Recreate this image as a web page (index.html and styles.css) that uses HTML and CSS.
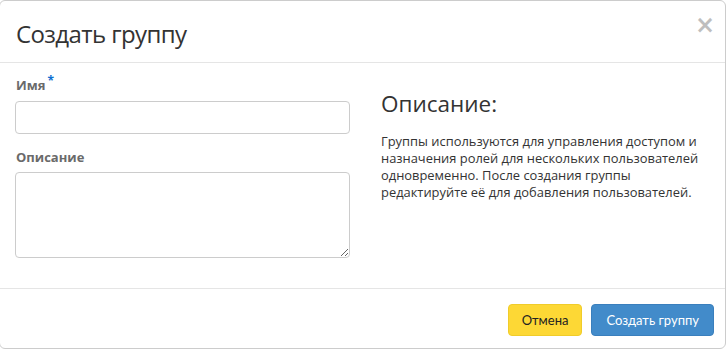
FILE: index.html
```html
<!DOCTYPE html>
<html lang="ru">
<head>
    <meta charset="UTF-8">
    <title>Создать группу</title>
    <link rel="stylesheet" href="styles.css">
</head>
<body>

<div class="modal">
    <div class="modal-header">
        <h3 class="modal-title">Создать группу</h3>
        <span class="close">&times;</span>
    </div>

    <div class="modal-body">
        <div class="form-col">
            <div class="form-group">
                <label for="name">Имя<span class="required">*</span></label>
                <input type="text" id="name">
            </div>
            <div class="form-group">
                <label for="description">Описание</label>
                <textarea id="description" rows="4"></textarea>
            </div>
        </div>
        <div class="help-col">
            <h3>Описание:</h3>
            <p>Группы используются для управления доступом и назначения ролей для нескольких пользователей одновременно. После создания группы редактируйте её для добавления пользователей.</p>
        </div>
    </div>

    <div class="modal-footer">
        <button class="btn btn-cancel">Отмена</button>
        <button class="btn btn-primary">Создать группу</button>
    </div>
</div>

</body>
</html>
```

FILE: styles.css
```css
body {
    margin: 0;
    padding: 0;
    background: #fff;
    font-family: 'Open Sans', sans-serif;
    color: #333;
}

.modal {
    width: 727px;
    height: 349px;
    border: 1px solid #ccc;
    border-radius: 6px;
    box-sizing: border-box;
    margin: 0 0 0 -1px;
}

.modal-header {
    display: flex;
    justify-content: space-between;
    align-items: flex-start;
    padding: 15px 10px 0 16px;
    height: 62px;
    box-sizing: border-box;
    border-bottom: 1px solid #e5e5e5;
}

.modal-title {
    margin: 3px 0 0;
    font-size: 24px;
    font-weight: 400;
    line-height: 30px;
    letter-spacing: -0.6px;
}

.close {
    font-family: 'DejaVu Sans', sans-serif;
    font-size: 24px;
    font-weight: bold;
    color: #000;
    opacity: 0.25;
    line-height: 20px;
    margin-top: -1px;
}

.modal-body {
    display: flex;
    padding: 13px 15px 0 15px;
    height: 226px;
    box-sizing: border-box;
    border-bottom: 1px solid #e5e5e5;
}

.form-col {
    flex: 0 0 335px;
}

.form-group {
    margin-bottom: 14px;
}

label {
    display: block;
    font-size: 13px;
    font-weight: 700;
    color: #6a6a6a;
    margin-bottom: 6px;
    line-height: 18px;
    padding-left: 1px;
}

.required {
    position: relative;
    top: -5px;
    color: #0e6fd1;
    font-size: 12px;
    margin-left: 2px;
}

input, textarea {
    display: block;
    width: 100%;
    box-sizing: border-box;
    border: 1px solid #ccc;
    border-radius: 4px;
    font-family: inherit;
    font-size: 13px;
    padding: 6px 10px;
}

input {
    height: 33px;
}

textarea {
    height: 86px;
}

.help-col {
    margin-left: 31px;
    width: 330px;
    padding-top: 13px;
}

.help-col h3 {
    margin: 0 0 14px;
    font-size: 22.5px;
    font-weight: 400;
    line-height: 30px;
}

.help-col p {
    margin: 0;
    font-size: 12.9px;
    line-height: 17px;
}

.modal-footer {
    display: flex;
    justify-content: flex-end;
    gap: 9px;
    padding: 15px 11px 0 0;
}

.btn {
    font-family: 'Lato', sans-serif;
    font-size: 13px;
    height: 32px;
    padding: 0 14px;
    border-radius: 4px;
    border: 1px solid transparent;
}

.btn-cancel {
    padding: 0 13px;
    background: #fdd835;
    border-color: #f0cc2a;
    color: #222;
}

.btn-primary {
    background: #428bca;
    border-color: #3a7fbd;
    color: #fff;
}
```
